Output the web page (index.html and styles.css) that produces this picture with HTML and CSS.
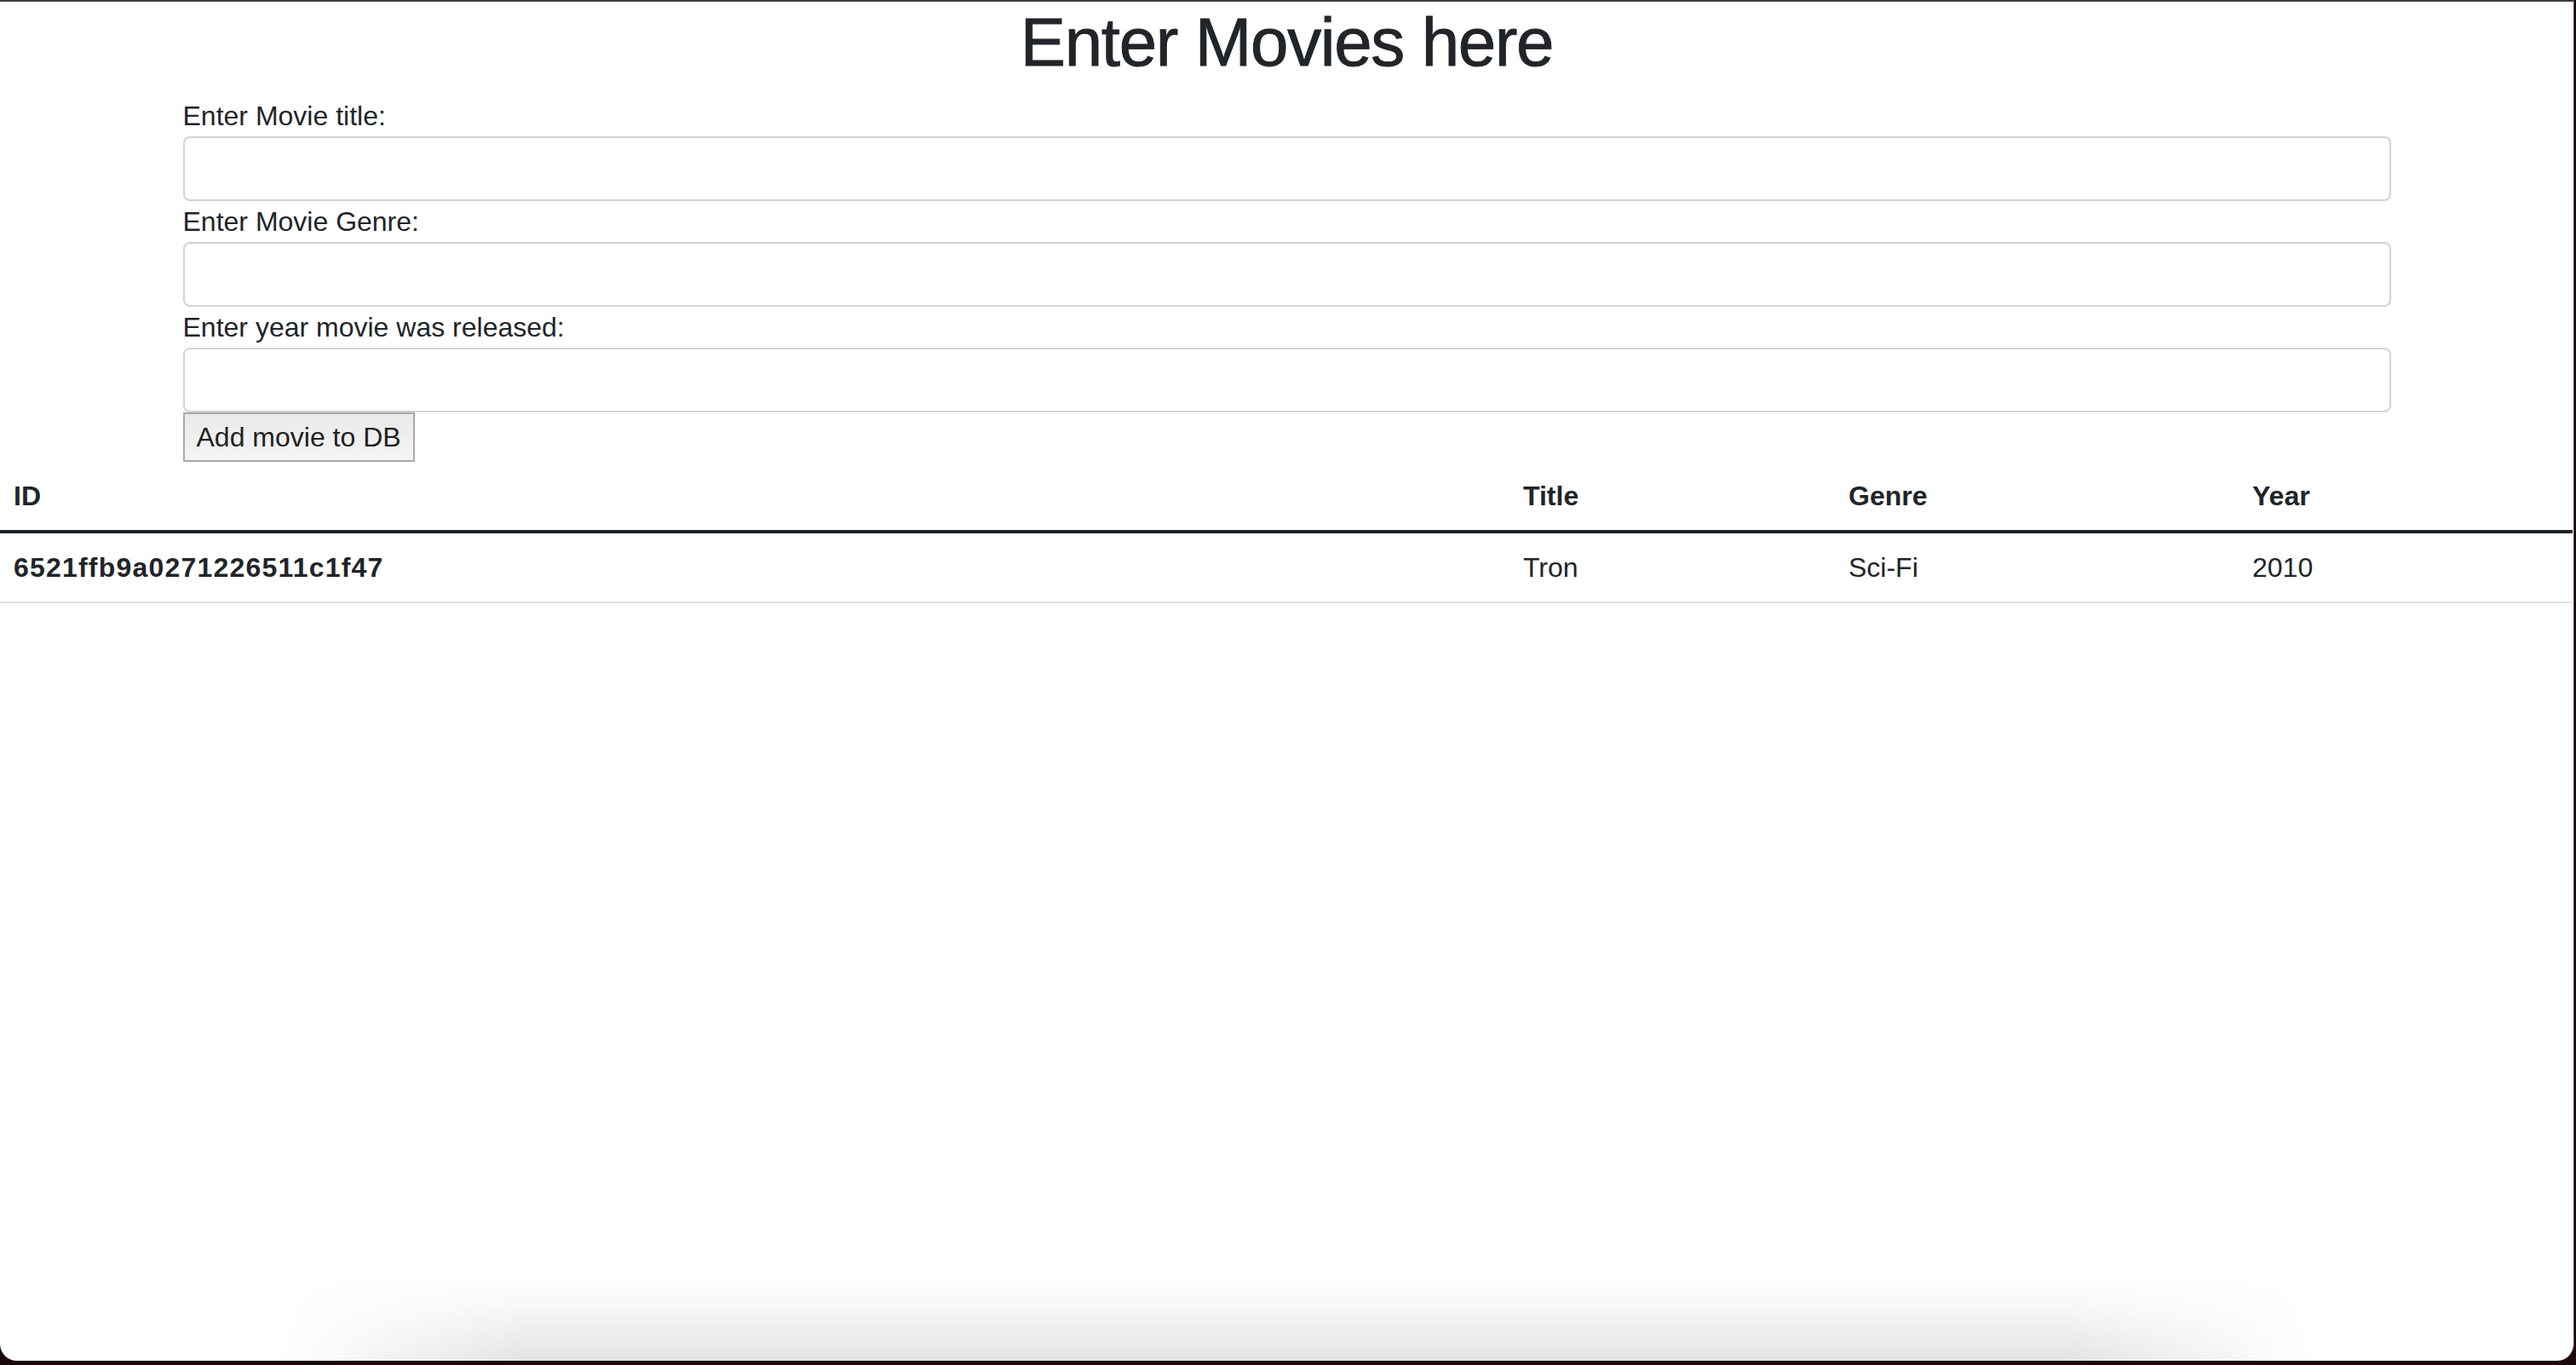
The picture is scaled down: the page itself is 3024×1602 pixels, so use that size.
FILE: index.html
```html
<!DOCTYPE html>
<html lang="en">
<head>
<meta charset="utf-8">
<title>Movies</title>
<link rel="stylesheet" href="styles.css">
</head>
<body>
<div class="window">
  <h1 class="page-title">Enter Movies here</h1>
  <form class="container">
    <label class="field-label" for="title">Enter Movie title:</label>
    <input class="field-input" id="title" type="text">
    <label class="field-label" for="genre">Enter Movie Genre:</label>
    <input class="field-input" id="genre" type="text">
    <label class="field-label" for="year">Enter year movie was released:</label>
    <input class="field-input" id="year" type="text">
    <button class="add-btn" type="button">Add movie to DB</button>
  </form>
  <table class="movies">
    <thead>
      <tr>
        <th class="col-id">ID</th>
        <th class="col-title">Title</th>
        <th class="col-genre">Genre</th>
        <th class="col-year">Year</th>
      </tr>
    </thead>
    <tbody>
      <tr>
        <th class="row-id">6521ffb9a0271226511c1f47</th>
        <td>Tron</td>
        <td>Sci-Fi</td>
        <td>2010</td>
      </tr>
    </tbody>
  </table>
  <div class="dock-shadow"></div>
</div>
</body>
</html>
```
FILE: styles.css
```css
html, body {
  margin: 0;
  padding: 0;
}
body {
  background: #1c0709;
  font-family: "Liberation Sans", Arial, sans-serif;
  color: #212529;
}
.window {
  position: relative;
  box-sizing: border-box;
  width: 3022px;
  height: 1597px;
  background: #ffffff;
  border-top: 2px solid #3c3c3c;
  border-right: 1px solid #4a4a4a;
  border-radius: 0 0 20px 20px;
  overflow: hidden;
}
.page-title {
  margin: 0 0 14px;
  font-size: 80px;
  font-weight: 500;
  line-height: 96px;
  letter-spacing: -1.4px;
  -webkit-text-stroke: 0.9px #212529;
  text-align: center;
  color: #212529;
}
.container {
  width: 2592px;
  margin: 0 auto;
  display: flex;
  flex-direction: column;
  align-items: flex-start;
}
.field-label {
  display: block;
  font-size: 32px;
  line-height: 48px;
  color: #212529;
}
.field-input {
  display: block;
  box-sizing: border-box;
  width: 100%;
  height: 76px;
  margin: 0;
  border: 2px solid #ced4da;
  border-radius: 8px;
  background: #fff;
  font-size: 32px;
}
.add-btn {
  box-sizing: border-box;
  height: 58px;
  margin: 0;
  padding: 2px 14px;
  font-family: "Liberation Sans", Arial, sans-serif;
  font-size: 32px;
  line-height: 48px;
  color: #222;
  border: 2px solid #a9a9a9;
  border-radius: 0;
  background: linear-gradient(#e9e9e9, #f5f5f5);
}
.movies {
  width: 3020px;
  table-layout: fixed;
  border-collapse: collapse;
  margin-top: 0;
}
.movies th,
.movies td {
  padding: 16px 16px;
  font-size: 32px;
  line-height: 48px;
  text-align: left;
  color: #212529;
}
.movies th {
  font-weight: 700;
}
.movies td {
  font-weight: 400;
}
.movies thead tr {
  border-bottom: 4px solid #212529;
}
.movies tbody tr {
  border-bottom: 2px solid #dee2e6;
}
.col-id { width: 1740px; }
.col-title { width: 350px; }
.col-genre { width: 442px; }
.col-year { width: 360px; }
.row-id {
  letter-spacing: 1.2px;
}
.dock-shadow {
  position: absolute;
  left: 330px;
  right: 310px;
  bottom: 0;
  height: 105px;
  background: linear-gradient(to bottom, rgba(0, 0, 0, 0), rgba(0, 0, 0, 0.03) 40%, rgba(0, 0, 0, 0.11));
  -webkit-mask-image: linear-gradient(to right, transparent, #000 12%, #000 88%, transparent);
  mask-image: linear-gradient(to right, transparent, #000 12%, #000 88%, transparent);
  pointer-events: none;
}
```
